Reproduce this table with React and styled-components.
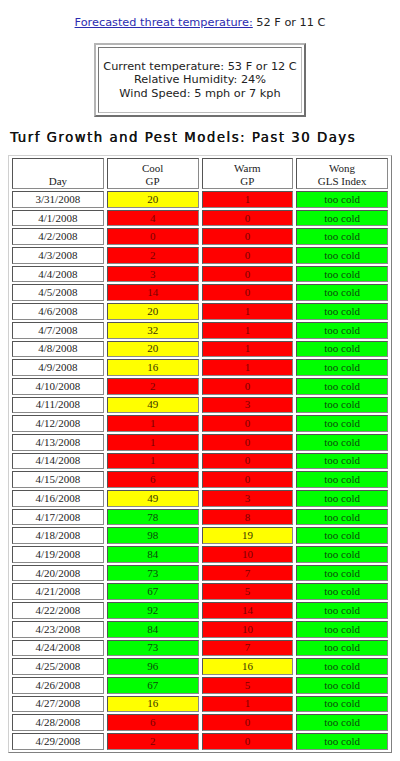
import styled, { createGlobalStyle } from 'styled-components';

const GlobalStyle = createGlobalStyle`
  html, body {
    margin: 0;
    padding: 0;
    background: #fff;
  }
`;

const Page = styled.div`
  padding: 8px;
  font-family: 'DejaVu Sans', Verdana, sans-serif;
  color: #222;
`;

const Forecast = styled.div`
  margin-top: 8px;
  text-align: center;
  font-size: 11.3px;
  line-height: 14px;

  a {
    color: #2b2bb0;
    text-decoration: underline;
  }
`;

const ConditionsBox = styled.div`
  margin: 13px auto 0;
  width: 212px;
  box-sizing: border-box;
  padding: 2px;
  border: 2px solid;
  border-color: #b5b5b5 #6f6f6f #6f6f6f #b5b5b5;
`;

const ConditionsInner = styled.div`
  height: 64px;
  display: flex;
  flex-direction: column;
  justify-content: center;
  align-items: center;
  border: 1px solid;
  border-color: #777 #bbb #bbb #777;
  font-size: 11.3px;
  line-height: 13.5px;
`;

const Heading = styled.h2`
  margin: 12px 0 0 2px;
  font-size: 13.3px;
  line-height: 17px;
  font-weight: normal;
  letter-spacing: 1.5px;
  color: #111;
  text-shadow: 0.4px 0 0 #111;
`;

const Table = styled.table`
  margin-top: 9px;
  width: 100%;
  border-collapse: separate;
  border-spacing: 3px 2px;
  border: 1px solid;
  border-color: #d0d0d0 #808080 #808080 #d0d0d0;
  table-layout: fixed;
  font-family: 'Liberation Serif', 'Times New Roman', serif;
  font-size: 11px;
`;

const HeadCell = styled.th`
  font-weight: normal;
  height: 29px;
  padding: 0;
  background: #fff;
  color: #222;
  line-height: 13px;
  vertical-align: bottom;
  border: 1px solid;
  border-color: #555 #8a8a8a #8a8a8a #555;
`;

const Row = styled.tr`
  height: 16.7px;
`;

const tones = {
  white: { bg: '#fff', fg: '#222' },
  red: { bg: '#ff0000', fg: '#7a0000' },
  yellow: { bg: '#ffff00', fg: '#3a3300' },
  green: { bg: '#00ff00', fg: '#0b4a0b' },
};

const Cell = styled.td`
  padding: 0;
  text-align: center;
  line-height: 13px;
  background: ${(p) => tones[p.$tone].bg};
  color: ${(p) => tones[p.$tone].fg};
  border: 1px solid;
  border-color: #555 #8a8a8a #8a8a8a #555;
`;

const rows = [
  ['3/31/2008', 20, 1],
  ['4/1/2008', 4, 0],
  ['4/2/2008', 0, 0],
  ['4/3/2008', 2, 0],
  ['4/4/2008', 3, 0],
  ['4/5/2008', 14, 0],
  ['4/6/2008', 20, 1],
  ['4/7/2008', 32, 1],
  ['4/8/2008', 20, 1],
  ['4/9/2008', 16, 1],
  ['4/10/2008', 2, 0],
  ['4/11/2008', 49, 3],
  ['4/12/2008', 1, 0],
  ['4/13/2008', 1, 0],
  ['4/14/2008', 1, 0],
  ['4/15/2008', 6, 0],
  ['4/16/2008', 49, 3],
  ['4/17/2008', 78, 8],
  ['4/18/2008', 98, 19],
  ['4/19/2008', 84, 10],
  ['4/20/2008', 73, 7],
  ['4/21/2008', 67, 5],
  ['4/22/2008', 92, 14],
  ['4/23/2008', 84, 10],
  ['4/24/2008', 73, 7],
  ['4/25/2008', 96, 16],
  ['4/26/2008', 67, 5],
  ['4/27/2008', 16, 1],
  ['4/28/2008', 6, 0],
  ['4/29/2008', 2, 0],
];

// growth potential bands
const gpTone = (v) => (v < 15 ? 'red' : v <= 50 ? 'yellow' : 'green');

const App = () => (
  <Page>
    <GlobalStyle />
    <Forecast>
      <a href="#threat">Forecasted threat temperature:</a> 52 F or 11 C
    </Forecast>

    <ConditionsBox>
      <ConditionsInner>
        <div>Current temperature: 53 F or 12 C</div>
        <div>Relative Humidity: 24%</div>
        <div>Wind Speed: 5 mph or 7 kph</div>
      </ConditionsInner>
    </ConditionsBox>

    <Heading>Turf Growth and Pest Models: Past 30 Days</Heading>

    <Table>
      <thead>
        <tr>
          <HeadCell>Day</HeadCell>
          <HeadCell>
            Cool
            <br />
            GP
          </HeadCell>
          <HeadCell>
            Warm
            <br />
            GP
          </HeadCell>
          <HeadCell>
            Wong
            <br />
            GLS Index
          </HeadCell>
        </tr>
      </thead>
      <tbody>
        {rows.map(([day, cool, warm]) => (
          <Row key={day}>
            <Cell $tone="white">{day}</Cell>
            <Cell $tone={gpTone(cool)}>{cool}</Cell>
            <Cell $tone={gpTone(warm)}>{warm}</Cell>
            <Cell $tone="green">too cold</Cell>
          </Row>
        ))}
      </tbody>
    </Table>
  </Page>
);

export default App;
